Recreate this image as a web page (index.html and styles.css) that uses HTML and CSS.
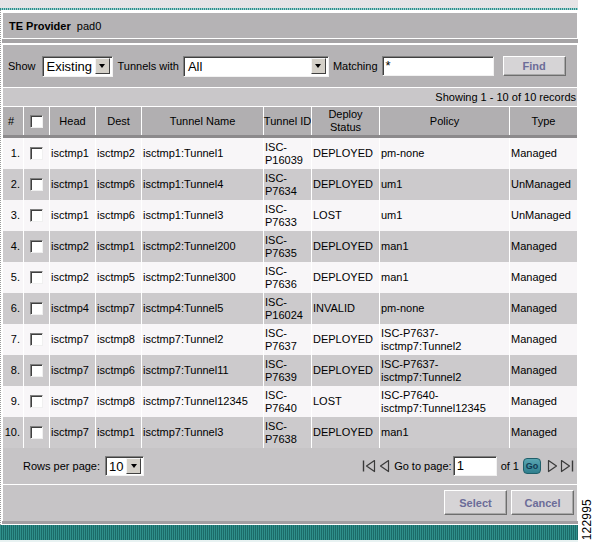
FILE: index.html
```html
<!DOCTYPE html>
<html>
<head>
<meta charset="utf-8">
<link rel="stylesheet" href="styles.css">
</head>
<body>
<div class="screen">
  <div class="main">
    <div class="topstrip"></div>
    <div class="dots"></div>
    <div class="frame">
      <div class="title"><b>TE Provider</b> pad0</div>
      <div class="strip"></div>
      <div class="filter">
        <span class="lbl l-show">Show</span>
        <div class="select sel-show"><span class="val">Existing</span><span class="arrow"><i></i></span></div>
        <span class="lbl l-tun">Tunnels with</span>
        <div class="select sel-all"><span class="val">All</span><span class="arrow"><i></i></span></div>
        <span class="lbl l-match">Matching</span>
        <div class="input in-match">*</div>
        <div class="btn btn-find">Find</div>
      </div>
      <div class="tablebox">
        <div class="showing">Showing 1 - 10 of 10 records</div>
        <div class="row head">
          <div class="c-num">#</div>
          <div class="c-cb"><span class="cb"></span></div>
          <div>Head</div>
          <div>Dest</div>
          <div>Tunnel Name</div>
          <div>Tunnel ID</div>
          <div>Deploy<br>Status</div>
          <div>Policy</div>
          <div>Type</div>
        </div>
        <div class="row light">
          <div class="c-num">1.</div><div class="c-cb"><span class="cb"></span></div>
          <div>isctmp1</div><div>isctmp2</div><div>isctmp1:Tunnel1</div>
          <div>ISC-<br>P16039</div><div>DEPLOYED</div><div>pm-none</div><div>Managed</div>
        </div>
        <div class="row dark">
          <div class="c-num">2.</div><div class="c-cb"><span class="cb"></span></div>
          <div>isctmp1</div><div>isctmp6</div><div>isctmp1:Tunnel4</div>
          <div>ISC-<br>P7634</div><div>DEPLOYED</div><div>um1</div><div>UnManaged</div>
        </div>
        <div class="row light">
          <div class="c-num">3.</div><div class="c-cb"><span class="cb"></span></div>
          <div>isctmp1</div><div>isctmp6</div><div>isctmp1:Tunnel3</div>
          <div>ISC-<br>P7633</div><div>LOST</div><div>um1</div><div>UnManaged</div>
        </div>
        <div class="row dark">
          <div class="c-num">4.</div><div class="c-cb"><span class="cb"></span></div>
          <div>isctmp2</div><div>isctmp1</div><div>isctmp2:Tunnel200</div>
          <div>ISC-<br>P7635</div><div>DEPLOYED</div><div>man1</div><div>Managed</div>
        </div>
        <div class="row light">
          <div class="c-num">5.</div><div class="c-cb"><span class="cb"></span></div>
          <div>isctmp2</div><div>isctmp5</div><div>isctmp2:Tunnel300</div>
          <div>ISC-<br>P7636</div><div>DEPLOYED</div><div>man1</div><div>Managed</div>
        </div>
        <div class="row dark">
          <div class="c-num">6.</div><div class="c-cb"><span class="cb"></span></div>
          <div>isctmp4</div><div>isctmp7</div><div>isctmp4:Tunnel5</div>
          <div>ISC-<br>P16024</div><div>INVALID</div><div>pm-none</div><div>Managed</div>
        </div>
        <div class="row light">
          <div class="c-num">7.</div><div class="c-cb"><span class="cb"></span></div>
          <div>isctmp7</div><div>isctmp8</div><div>isctmp7:Tunnel2</div>
          <div>ISC-<br>P7637</div><div>DEPLOYED</div><div>ISC-P7637-<br>isctmp7:Tunnel2</div><div>Managed</div>
        </div>
        <div class="row dark">
          <div class="c-num">8.</div><div class="c-cb"><span class="cb"></span></div>
          <div>isctmp7</div><div>isctmp6</div><div>isctmp7:Tunnel11</div>
          <div>ISC-<br>P7639</div><div>DEPLOYED</div><div>ISC-P7637-<br>isctmp7:Tunnel2</div><div>Managed</div>
        </div>
        <div class="row light">
          <div class="c-num">9.</div><div class="c-cb"><span class="cb"></span></div>
          <div>isctmp7</div><div>isctmp8</div><div>isctmp7:Tunnel12345</div>
          <div>ISC-<br>P7640</div><div>LOST</div><div>ISC-P7640-<br>isctmp7:Tunnel12345</div><div>Managed</div>
        </div>
        <div class="row dark">
          <div class="c-num">10.</div><div class="c-cb"><span class="cb"></span></div>
          <div>isctmp7</div><div>isctmp1</div><div>isctmp7:Tunnel3</div>
          <div>ISC-<br>P7638</div><div>DEPLOYED</div><div>man1</div><div>Managed</div>
        </div>
        <div class="pager">
          <div class="rpp">
            <span class="lbl">Rows per page:</span>
            <div class="select sel-rows"><span class="val">10</span><span class="arrow"><i></i></span></div>
          </div>
          <div class="nav">
            <svg class="ico i-first" width="14" height="14" viewBox="0 0 14 14"><path d="M1.5 1.5V12.5" stroke="#3a3a3a" stroke-width="1.4" fill="none"/><path d="M12.5 1.5L4.5 7L12.5 12.5Z" stroke="#3a3a3a" stroke-width="1.2" fill="none" stroke-linejoin="round"/></svg>
            <svg class="ico i-prev" width="11" height="14" viewBox="0 0 11 14"><path d="M9.5 1.5L1.5 7L9.5 12.5Z" stroke="#3a3a3a" stroke-width="1.2" fill="none" stroke-linejoin="round"/></svg>
            <span class="lbl l-goto">Go to page:</span>
            <div class="input in-page">1</div>
            <span class="lbl l-of">of 1</span>
            <div class="go">Go</div>
            <svg class="ico i-next" width="11" height="14" viewBox="0 0 11 14"><path d="M1.5 1.5L9.5 7L1.5 12.5Z" stroke="#3a3a3a" stroke-width="1.2" fill="none" stroke-linejoin="round"/></svg>
            <svg class="ico i-last" width="14" height="14" viewBox="0 0 14 14"><path d="M1.5 1.5L9.5 7L1.5 12.5Z" stroke="#3a3a3a" stroke-width="1.2" fill="none" stroke-linejoin="round"/><path d="M12.5 1.5V12.5" stroke="#3a3a3a" stroke-width="1.4" fill="none"/></svg>
          </div>
        </div>
      </div>
      <div class="actions">
        <div class="btn btn-act">Select</div>
        <div class="btn btn-act">Cancel</div>
      </div>
      <div class="darkstrip"></div>
    </div>
    <div class="teal"></div>
    <div class="bottom"></div>
  </div>
  <div class="side"><span class="fig">122995</span></div>
</div>
</body>
</html>
```
FILE: styles.css
```css
* { box-sizing: border-box; }
body {
  margin: 0;
  background: #fff;
  font-family: "Liberation Sans", Arial, sans-serif;
  font-size: 11px;
  color: #000;
}
.screen {
  display: flex;
  width: 593px;
  height: 542px;
  overflow: hidden;
}
.main {
  width: 578px;
  display: flex;
  flex-direction: column;
}
.topstrip {
  height: 8px;
  background: #e6e4e6;
}
.dots {
  height: 2px;
  background: repeating-linear-gradient(90deg, #2e8e8c 0 1px, #9fcfcd 1px 2px);
}
.frame {
  border-left: 1px dotted #9a9a9a;
  padding: 2px 0 0 1px;
  background: #fff;
}
.title {
  height: 27px;
  border: 1px solid #fff;
  background: #b5b3b5;
  padding-left: 6px;
  display: flex;
  align-items: center;
  gap: 3px;
  white-space: pre;
}
.title b { font-weight: bold; }
.strip {
  height: 5px;
  background: #a5a3a5;
  border-bottom: 1px solid #fff;
}
.filter {
  height: 44px;
  border: 1px solid #fff;
  background: #b5b3b5;
  display: flex;
  align-items: center;
  padding-left: 5px;
}
.lbl { white-space: nowrap; }
.l-show { margin-right: 6px; }
.l-tun { margin: 0 4px 0 5px; }
.l-match { margin: 0 4px 0 4px; }
.select {
  display: flex;
  align-items: center;
  height: 21px;
  background: #fff;
  border: 1px solid;
  border-color: #808080 #f2f2f2 #f2f2f2 #808080;
  box-shadow: inset 1px 1px 0 #404040;
  padding: 2px 2px 2px 4px;
}
.select .val {
  flex: 1;
  font-size: 13px;
  line-height: 15px;
}
.select .arrow {
  width: 15px;
  height: 16px;
  background: #d4d0c8;
  border: 1px solid;
  border-color: #f4f4f4 #404040 #404040 #f4f4f4;
  display: flex;
  align-items: center;
  justify-content: center;
}
.select .arrow i {
  width: 0;
  height: 0;
  border-left: 3.5px solid transparent;
  border-right: 3.5px solid transparent;
  border-top: 4px solid #000;
}
.sel-show { width: 71px; }
.sel-all { width: 146px; }
.sel-rows { width: 39px; height: 20px; padding-left: 3px; }
.input {
  height: 20px;
  background: #fff;
  border: 1px solid;
  border-color: #808080 #f2f2f2 #f2f2f2 #808080;
  box-shadow: inset 1px 1px 0 #404040;
  font-size: 13px;
  line-height: 17px;
  padding-left: 3px;
}
.in-match { width: 112px; margin-right: 9px; }
.btn {
  display: flex;
  align-items: center;
  justify-content: center;
  background: #d6d4d6;
  border: 1px solid;
  border-color: #ffffff #6e6e6e #6e6e6e #ffffff;
  box-shadow: inset -1px -1px 0 #a8a8a8;
  font-weight: bold;
  color: #6c6c98;
}
.btn-find { width: 63px; height: 20px; }
.tablebox {
  border-left: 1px solid #fff;
  border-right: 1px solid #fff;
}
.showing {
  height: 18px;
  background: #c9c7c9;
  text-align: right;
  padding-right: 1px;
  line-height: 18px;
}
.row {
  display: grid;
  grid-template-columns: 20px 26px 46px 46px 122px 48px 68px 130px 68px;
  height: 31px;
}
.row > div {
  border-left: 1px solid #fff;
  display: flex;
  align-items: center;
  padding-left: 1px;
  line-height: 13px;
  white-space: nowrap;
}
.row > .c-num {
  border-left: none;
  justify-content: flex-end;
  padding: 0 3px 0 0;
}
.row > .c-cb {
  justify-content: center;
  padding: 0;
}
.row.head {
  height: 32px;
  background: #b1afb1;
  border-top: 1px solid #fff;
  border-bottom: 3px solid #8c8a8c;
}
.row.head > div {
  justify-content: center;
  text-align: center;
  padding: 0;
}
.row.head > .c-num {
  justify-content: flex-start;
  padding-left: 5px;
}
.row.light { background: #f8f6f8; }
.row.dark { background: #cccacc; }
.cb {
  display: block;
  width: 13px;
  height: 13px;
  background: #fff;
  border: 1px solid;
  border-color: #808080 #f0f0f0 #f0f0f0 #808080;
  box-shadow: inset 1px 1px 0 #404040;
}
.pager {
  height: 36px;
  background: #c6c4c6;
  display: flex;
  align-items: center;
  justify-content: space-between;
  padding: 0 3px 0 20px;
}
.rpp {
  display: flex;
  align-items: center;
  gap: 5px;
}
.nav {
  display: flex;
  align-items: center;
}
.ico { display: block; }
.i-first { margin-right: 3px; }
.i-prev { margin-right: 4px; }
.l-goto { margin-right: 1px; }
.in-page { width: 44px; height: 20px; margin-right: 4px; }
.l-of { margin-right: 4px; }
.go {
  width: 18px;
  height: 16px;
  border-radius: 4px;
  background: linear-gradient(#5aa6b2, #2f7f8e);
  border: 1px solid #1f5f6a;
  color: #123a52;
  font-weight: bold;
  font-size: 9px;
  display: flex;
  align-items: center;
  justify-content: center;
  margin-right: 6px;
}
.i-next { margin-right: 2px; }
.actions {
  height: 37px;
  border-top: 1px solid #fff;
  border-left: 1px solid #fff;
  border-right: 1px solid #fff;
  background: #c6c4c6;
  display: flex;
  align-items: center;
  justify-content: flex-end;
  gap: 4px;
  padding: 0 3px 1px 0;
}
.btn-act { width: 63px; height: 25px; }
.darkstrip {
  height: 4px;
  background: #a29ea2;
  border-bottom: 1px solid #fff;
}
.teal {
  height: 15px;
  background: repeating-linear-gradient(90deg, #2f8f8b 0 1px, #1c6b69 1px 2px);
}
.bottom {
  flex: 1;
  background: #e8f2f2;
}
.side {
  width: 15px;
  display: flex;
  align-items: flex-end;
  padding: 0 0 2px 4px;
}
.fig {
  writing-mode: vertical-rl;
  transform: rotate(180deg);
  font-size: 12px;
  line-height: 10px;
  letter-spacing: 0.2px;
}
```
